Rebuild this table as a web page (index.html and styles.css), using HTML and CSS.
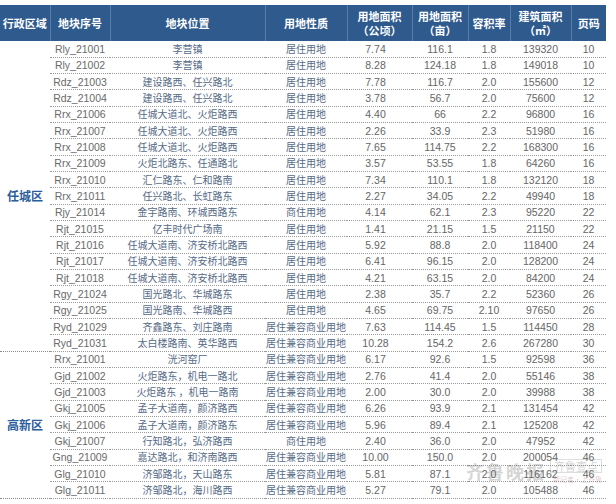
FILE: index.html
```html
<!DOCTYPE html>
<html lang="zh">
<head>
<meta charset="utf-8">
<title>地块列表</title>
<link rel="stylesheet" href="styles.css">
</head>
<body>
<div class="wrap">
<table class="plots">
<colgroup>
<col class="c1"><col class="c2"><col class="c3"><col class="c4"><col class="c5"><col class="c6"><col class="c7"><col class="c8"><col class="c9">
</colgroup>
<thead>
<tr>
<th>行政区域</th><th>地块序号</th><th>地块位置</th><th>用地性质</th><th>用地面积<br>（公顷）</th><th>用地面积<br>（亩）</th><th>容积率</th><th>建筑面积<br>（㎡）</th><th>页码</th>
</tr>
</thead>
<tbody class="grp">
<tr><td class="dist" rowspan="19">任城区</td><td class="code">Rly_21001</td><td class="cn">李营镇</td><td class="cn">居住用地</td><td class="ha">7.74</td><td>116.1</td><td>1.8</td><td>139320</td><td>10</td></tr>
<tr><td class="code">Rly_21002</td><td class="cn">李营镇</td><td class="cn">居住用地</td><td class="ha">8.28</td><td>124.18</td><td>1.8</td><td>149018</td><td>10</td></tr>
<tr><td class="code">Rdz_21003</td><td class="cn">建设路西、任兴路北</td><td class="cn">居住用地</td><td class="ha">7.78</td><td>116.7</td><td>2.0</td><td>155600</td><td>12</td></tr>
<tr><td class="code">Rdz_21004</td><td class="cn">建设路西、任兴路北</td><td class="cn">居住用地</td><td class="ha">3.78</td><td>56.7</td><td>2.0</td><td>75600</td><td>12</td></tr>
<tr><td class="code">Rrx_21006</td><td class="cn">任城大道北、火炬路西</td><td class="cn">居住用地</td><td class="ha">4.40</td><td>66</td><td>2.2</td><td>96800</td><td>16</td></tr>
<tr><td class="code">Rrx_21007</td><td class="cn">任城大道北、火炬路西</td><td class="cn">居住用地</td><td class="ha">2.26</td><td>33.9</td><td>2.3</td><td>51980</td><td>16</td></tr>
<tr><td class="code">Rrx_21008</td><td class="cn">任城大道北、火炬路西</td><td class="cn">居住用地</td><td class="ha">7.65</td><td>114.75</td><td>2.2</td><td>168300</td><td>16</td></tr>
<tr><td class="code">Rrx_21009</td><td class="cn">火炬北路东、任通路北</td><td class="cn">居住用地</td><td class="ha">3.57</td><td>53.55</td><td>1.8</td><td>64260</td><td>16</td></tr>
<tr><td class="code">Rrx_21010</td><td class="cn">汇仁路东、仁和路南</td><td class="cn">居住用地</td><td class="ha">7.34</td><td>110.1</td><td>1.8</td><td>132120</td><td>18</td></tr>
<tr><td class="code">Rrx_21011</td><td class="cn">任兴路北、长虹路东</td><td class="cn">居住用地</td><td class="ha">2.27</td><td>34.05</td><td>2.2</td><td>49940</td><td>18</td></tr>
<tr><td class="code">Rjy_21014</td><td class="cn">金宇路南、环城西路东</td><td class="cn">商住用地</td><td class="ha">4.14</td><td>62.1</td><td>2.3</td><td>95220</td><td>22</td></tr>
<tr><td class="code">Rjt_21015</td><td class="cn">亿丰时代广场南</td><td class="cn">居住用地</td><td class="ha">1.41</td><td>21.15</td><td>1.5</td><td>21150</td><td>22</td></tr>
<tr><td class="code">Rjt_21016</td><td class="cn">任城大道南、济安桥北路西</td><td class="cn">居住用地</td><td class="ha">5.92</td><td>88.8</td><td>2.0</td><td>118400</td><td>24</td></tr>
<tr><td class="code">Rjt_21017</td><td class="cn">任城大道南、济安桥北路西</td><td class="cn">居住用地</td><td class="ha">6.41</td><td>96.15</td><td>2.0</td><td>128200</td><td>24</td></tr>
<tr><td class="code">Rjt_21018</td><td class="cn">任城大道南、济安桥北路西</td><td class="cn">居住用地</td><td class="ha">4.21</td><td>63.15</td><td>2.0</td><td>84200</td><td>24</td></tr>
<tr><td class="code">Rgy_21024</td><td class="cn">国光路北、华城路东</td><td class="cn">居住用地</td><td class="ha">2.38</td><td>35.7</td><td>2.2</td><td>52360</td><td>26</td></tr>
<tr><td class="code">Rgy_21025</td><td class="cn">国光路南、华城路西</td><td class="cn">居住用地</td><td class="ha">4.65</td><td>69.75</td><td>2.10</td><td>97650</td><td>26</td></tr>
<tr><td class="code">Ryd_21029</td><td class="cn">齐鑫路东、刘庄路南</td><td class="cn">居住兼容商业用地</td><td class="ha">7.63</td><td>114.45</td><td>1.5</td><td>114450</td><td>28</td></tr>
<tr><td class="code">Ryd_21031</td><td class="cn">太白楼路南、英华路西</td><td class="cn">居住兼容商业用地</td><td class="ha">10.28</td><td>154.2</td><td>2.6</td><td>267280</td><td>30</td></tr>
</tbody>
<tbody class="grp">
<tr><td class="dist" rowspan="9">高新区</td><td class="code">Rrx_21001</td><td class="cn">洸河窑厂</td><td class="cn">居住兼容商业用地</td><td class="ha">6.17</td><td>92.6</td><td>1.5</td><td>92598</td><td>36</td></tr>
<tr><td class="code">Gjd_21002</td><td class="cn">火炬路东，机电一路北</td><td class="cn">居住兼容商业用地</td><td class="ha">2.76</td><td>41.4</td><td>2.0</td><td>55146</td><td>38</td></tr>
<tr><td class="code">Gjd_21003</td><td class="cn">火炬路东 ，机电一路南</td><td class="cn">居住兼容商业用地</td><td class="ha">2.00</td><td>30.0</td><td>2.0</td><td>39988</td><td>38</td></tr>
<tr><td class="code">Gkj_21005</td><td class="cn">孟子大道南，颜济路西</td><td class="cn">居住兼容商业用地</td><td class="ha">6.26</td><td>93.9</td><td>2.1</td><td>131454</td><td>42</td></tr>
<tr><td class="code">Gkj_21006</td><td class="cn">孟子大道南，颜济路东</td><td class="cn">居住兼容商业用地</td><td class="ha">5.96</td><td>89.4</td><td>2.1</td><td>125208</td><td>42</td></tr>
<tr><td class="code">Gkj_21007</td><td class="cn">行知路北，弘济路西</td><td class="cn">商住用地</td><td class="ha">2.40</td><td>36.0</td><td>2.0</td><td>47952</td><td>42</td></tr>
<tr><td class="code">Gng_21009</td><td class="cn">嘉达路北，和济南路西</td><td class="cn">居住兼容商业用地</td><td class="ha">10.00</td><td>150.0</td><td>2.0</td><td>200054</td><td>46</td></tr>
<tr><td class="code">Glg_21010</td><td class="cn">济邹路北，天山路东</td><td class="cn">居住兼容商业用地</td><td class="ha">5.81</td><td>87.1</td><td>2.0</td><td>116162</td><td>46</td></tr>
<tr><td class="code">Glg_21011</td><td class="cn">济邹路北，海川路西</td><td class="cn">居住兼容商业用地</td><td class="ha">5.27</td><td>79.1</td><td>2.0</td><td>105488</td><td>46</td></tr>
</tbody>
</table>
<div class="watermark">
<span class="wm-main">齐鲁晚报</span>
<span class="wm-side"><span class="wm-logo">齐鲁壹点</span><span class="wm-sub">新记者·上齐鲁</span></span>
</div>
</div>
</body>
</html>
```
FILE: styles.css
```css
html, body {
  margin: 0;
  padding: 0;
  background: #ffffff;
}
.wrap {
  position: relative;
  width: 616px;
  height: 504px;
  padding-top: 5px;
  box-sizing: border-box;
  overflow: hidden;
}
.plots {
  width: 606px;
  table-layout: fixed;
  border-collapse: collapse;
  border-spacing: 0;
  font-family: "Liberation Sans", "Noto Sans CJK SC", sans-serif;
  font-size: 10.5px;
  color: #666666;
}
.c1 { width: 50px; }
.c2 { width: 60px; }
.c3 { width: 155px; }
.c4 { width: 82px; }
.c5 { width: 65px; }
.c6 { width: 56px; }
.c7 { width: 42px; }
.c8 { width: 61px; }
.c9 { width: 35px; }

.plots thead tr {
  height: 36px;
}
.plots th {
  background: #2e5a8d;
  color: #ffffff;
  font-family: "Noto Sans CJK SC", sans-serif;
  font-weight: bold;
  font-size: 11px;
  line-height: 14px;
  padding: 0;
  text-align: center;
  vertical-align: middle;
  border-left: 1px solid #5a7ea8;
}
.plots th:first-child {
  border-left: none;
}
.plots tbody tr {
  height: 16.33px;
}
.plots td {
  padding: 0;
  line-height: 12px;
  text-align: center;
  vertical-align: middle;
  white-space: nowrap;
  border-bottom: 1px dotted #9a9a9a;
}
.plots td.cn {
  font-family: "Noto Sans CJK SC", sans-serif;
  font-size: 10px;
  color: #566a86;
}
.plots td.code {
  color: #6a6a6a;
}
.plots td.ha {
  padding-right: 8px;
}
.plots td.dist {
  font-family: "Noto Sans CJK SC", sans-serif;
  font-size: 12px;
  font-weight: bold;
  color: #2a5d9c;
  border-bottom: 1px dotted #8a8a8a;
}

.watermark {
  position: absolute;
  left: 466px;
  top: 458px;
  display: flex;
  align-items: center;
  gap: 4px;
  opacity: 0.28;
  pointer-events: none;
}
.wm-main {
  font-family: "Noto Sans CJK SC", sans-serif;
  font-size: 18px;
  font-weight: bold;
  color: #6a6a6a;
  letter-spacing: 2px;
}
.wm-side {
  display: flex;
  flex-direction: column;
  align-items: flex-end;
  gap: 2px;
}
.wm-logo {
  font-family: "Noto Sans CJK SC", sans-serif;
  font-size: 11px;
  color: #666;
  border: 1px solid #888;
  padding: 0 3px;
  line-height: 12px;
}
.wm-sub {
  font-family: "Noto Sans CJK SC", sans-serif;
  font-size: 7px;
  color: #8a4a4a;
  line-height: 8px;
}
```
